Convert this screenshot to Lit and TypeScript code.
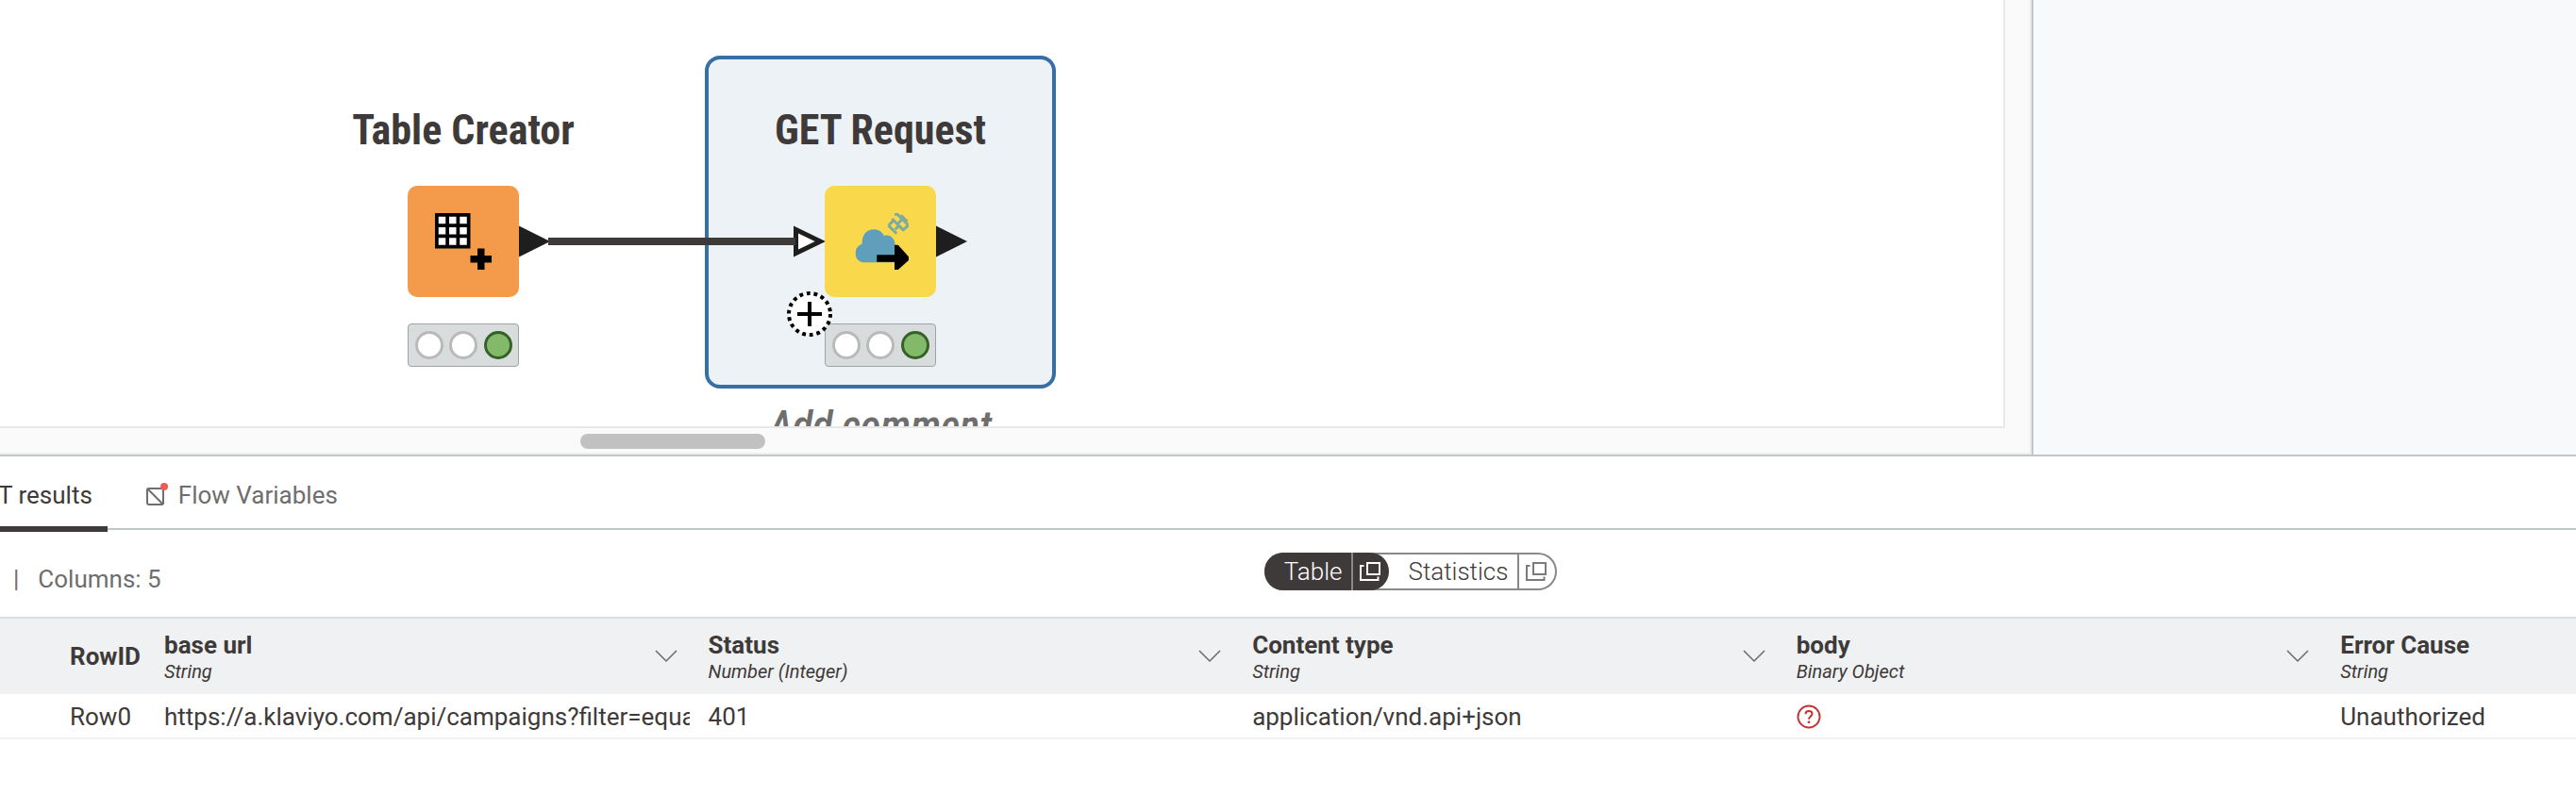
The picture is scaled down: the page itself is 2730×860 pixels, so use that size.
import {LitElement, html, css, svg, nothing} from "lit";
import {customElement, property} from "lit/decorators.js";
import {classMap} from "lit/directives/class-map.js";

interface Column {
  name: string;
  type: string;
}

const COLUMNS: Column[] = [
  {name: "base url", type: "String"},
  {name: "Status", type: "Number (Integer)"},
  {name: "Content type", type: "String"},
  {name: "body", type: "Binary Object"},
  {name: "Error Cause", type: "String"},
];

const openIcon = html`<svg class="icon" width="24" height="24" viewBox="0 0 24 24" fill="none" stroke="currentColor" stroke-width="2" aria-hidden="true">
  <rect x="9" y="3" width="13" height="12" />
  <path d="M5.500 6H2v15h18.500v-3.500" />
</svg>`;

const tableIcon = svg`
  <rect width="10" height="10" fill="#000" />
  ${[1, 4, 7].map((y) => [1, 4, 7].map((x) => svg`<rect x=${x} y=${y} width="2" height="2" fill="#fff" />`))}
  <path d="M12 10h2v2h2v2h-2v2h-2v-2h-2v-2h2z" fill="#000" />`;

const requestIcon = svg`
  <path d="M3 13.9C1.7 13.7 1 12.7 1 11.4C1 10 1.6 9.1 2.8 8.7C2.8 6.3 4 4.6 6 4.6C7.5 4.6 8.6 5.3 9 6.4C10.6 5.9 12.1 7 12.1 8.8V13.9Z" fill="#609fbc" />
  <g fill="none" stroke="#7dab9e" stroke-width=".8">
    <path d="M12 .3h.8L15.700 3.200V4M11.300 1.600L14.600 4.900M10.300 3.500L12.600 5.800" />
    <path d="M10.300 3.500L11.600 2.200M12.200 4.600L13.200 3.600M13 2.900L14 1.900M14.300 4.900L15.600 3.700M13.800.6L15.600 2.400" />
  </g>
  <path d="M7 11.8h5V9h1l3 3.300v1L13 16h-1v-2.200H7z" fill="#000" />`;

@customElement("workflow-node")
class WorkflowNode extends LitElement {
  @property() name = "";
  @property() kind: "source" | "request" = "source";
  @property({type: Boolean}) selected = false;
  @property({type: Boolean, attribute: "has-input"}) hasInput = false;

  static styles = css`
    :host { display: block; width: 372px; height: 353px; }
    .node {
      box-sizing: border-box; position: relative; width: 100%; height: 100%;
      display: flex; flex-direction: column; align-items: center;
      padding-top: 49px; border: 4px solid transparent; border-radius: 16px;
    }
    .selected { border-color: #366fa8; background: #edf2f7; }
    h2 {
      margin: 0; font-size: 44px; line-height: 52px; font-weight: 700;
      white-space: nowrap; color: #3e3a39;
    }
    .body { position: relative; margin-top: 33px; width: 118px; height: 118px; border-radius: 10px;
      display: grid; place-items: center; }
    .source { background: #f39b4b; }
    .request { background: #fad84b; }
    .port { position: absolute; top: 42px; }
    .out { left: 118px; }
    .in { right: 118px; }
    .status {
      box-sizing: border-box; width: 118px; height: 46px; margin-top: 28px;
      display: flex; align-items: center; justify-content: space-evenly;
      border: 1px solid #9fa3a4; border-radius: 4px; background: #d8dcdd;
    }
    .lamp { box-sizing: border-box; width: 30px; height: 30px; border: 3px solid #b9b9b9; border-radius: 50%; background: #fff; }
    .on { border-color: #356128; background: #82ba69; }
  `;

  render() {
    return html`
      <div class=${classMap({node: true, selected: this.selected})}>
        <h2>${this.name}</h2>
        <div class=${classMap({body: true, [this.kind]: true})}>
          <svg width="60" height="60" viewBox="0 0 16 16" aria-hidden="true">
            ${this.kind === "source" ? tableIcon : requestIcon}
          </svg>
          ${this.hasInput
            ? html`<svg class="port in" width="34" height="34" viewBox="0 0 34 34" aria-hidden="true">
                <path d="M3.500 4.500L29.500 17L3.500 29.500Z" fill="#fff" stroke="#1e1e1e" stroke-width="5" />
              </svg>`
            : nothing}
          <svg class="port out" width="34" height="34" viewBox="0 0 34 34" aria-hidden="true">
            <path d="M0 .5L33 17L0 33.500Z" fill="#1e1e1e" />
          </svg>
        </div>
        <div class="status">
          <span class="lamp"></span><span class="lamp"></span><span class="lamp on"></span>
        </div>
      </div>`;
  }
}

@customElement("workflow-canvas")
class WorkflowCanvas extends LitElement {
  static styles = css`
    :host { display: flex; flex-direction: column; background: #fafafa; border-right: 2px solid #eeecea; border-bottom: 2px solid #eeeeee; }
    .sheet {
      position: relative; height: 452px; margin-right: 26px; overflow: hidden;
      background: #fff; border-right: 2px solid #e8e8e8; border-bottom: 2px solid #e8e8e8;
    }
    .creator, .getter, .link, .add, .comment { position: absolute; }
    .creator { left: 305px; top: 59px; }
    .getter { left: 747px; top: 59px; }
    .link { left: 581px; top: 252px; width: 262px; height: 8px; background: #3e3a39; }
    .add { left: 833px; top: 308px; width: 50px; height: 50px; padding: 0; border: 0; background: none; }
    .comment {
      left: 747px; top: 426px; width: 372px; margin: 0; text-align: center;
      font-size: 44px; line-height: 52px; font-style: italic; font-weight: 500; color: #6e6e6e;
    }
    .scroll { height: 16px; padding: 6px 0 4px; display: grid; grid-template-columns: 615fr 196fr 1340fr; }
    .thumb { grid-column: 2; border-radius: 8px; background: #c1c1c1; }
  `;

  render() {
    return html`
      <div class="sheet">
        <workflow-node class="creator" name="Table Creator" kind="source"></workflow-node>
        <workflow-node class="getter" name="GET Request" kind="request" selected has-input></workflow-node>
        <div class="link"></div>
        <button class="add" aria-label="Add port">
          <svg width="50" height="50" viewBox="0 0 50 50" aria-hidden="true">
            <circle cx="25" cy="25" r="22" fill="#fff" stroke="#000" stroke-width="4" stroke-dasharray="3.840 3.840" />
            <path d="M12 25h26M25 12v26" stroke="#000" stroke-width="4" />
          </svg>
        </button>
        <p class="comment">Add comment</p>
      </div>
      <div class="scroll"><div class="thumb"></div></div>`;
  }
}

@customElement("result-table")
class ResultTable extends LitElement {
  static styles = css`
    :host { display: block; }
    table { width: 100%; table-layout: fixed; border-collapse: separate; border-spacing: 0; border-top: 2px solid #d8dcdd; font-size: 26px; line-height: 30px; }
    .id { width: 164px; }
    .wide { width: 21.12%; }
    th, td { text-align: left; padding: 0 10px; vertical-align: middle; font-weight: 400; }
    thead th { height: 80px; background: #eff1f2; font-weight: 700; }
    tbody th, tbody td { box-sizing: border-box; height: 48px; padding-top: 2px; border-bottom: 2px solid #eff1f2; }
    thead th:first-child, tbody th { padding-left: 74px; padding-right: 0; }
    .head { display: flex; align-items: center; justify-content: space-between; padding-right: 13px; }
    .title { padding-top: 2px; }
    .type { display: block; font-size: 20px; line-height: 26px; font-weight: 400; font-style: italic; }
    .menu { display: flex; padding: 0; border: 0; background: none; color: #6a6a6a; }
    .cut { overflow: hidden; white-space: nowrap; }
    .missing { display: block; }
  `;

  render() {
    return html`
      <table>
        <colgroup><col class="id" />${COLUMNS.slice(1).map(() => html`<col class="wide" />`)}<col /></colgroup>
        <thead>
          <tr>
            <th scope="col">RowID</th>
            ${COLUMNS.map((c, i) => html`
              <th scope="col"><div class="head">
                <div class="title">${c.name}<span class="type">${c.type}</span></div>
                ${i < COLUMNS.length - 1
                  ? html`<button class="menu" aria-label="Options for ${c.name}">
                      <svg width="24" height="14" viewBox="0 0 24 14" fill="none" stroke="currentColor" stroke-width="1.500"><path d="M1 1l11 11L23 1" /></svg>
                    </button>`
                  : nothing}
              </div></th>`)}
          </tr>
        </thead>
        <tbody>
          <tr>
            <th scope="row">Row0</th>
            <td><div class="cut">https://a.klaviyo.com/api/campaigns?filter=equa</div></td>
            <td>401</td>
            <td>application/vnd.api+json</td>
            <td>
              <svg class="missing" width="26" height="26" viewBox="0 0 26 26" fill="none" stroke="#c03634" stroke-width="2" role="img" aria-label="Missing value">
                <circle cx="13" cy="13" r="11.500" />
                <path d="M9.500 10.300C9.500 8.200 11 7 13 7s3.500 1.200 3.500 3.100c0 2.600-3.500 2.500-3.500 5.700" />
                <circle cx="13" cy="18.800" r="1" fill="#c03634" stroke-width="1" />
              </svg>
            </td>
            <td>Unauthorized</td>
          </tr>
        </tbody>
      </table>`;
  }
}

@customElement("app-root")
class AppRoot extends LitElement {
  static styles = css`
    :host {
      display: flex; flex-direction: column; min-height: 100vh; background: #fff; overflow: hidden;
      font-family: "Roboto", "Liberation Sans", sans-serif; font-size: 26px; line-height: 30px; color: #3e3a39;
    }
    .top { display: flex; border-bottom: 2px solid #c1c6c8; }
    workflow-canvas { flex: 1; min-width: 0; font-family: "Roboto Condensed", "Roboto", sans-serif; }
    .side { box-sizing: border-box; width: 577px; border-left: 2px solid #c1c6c8; background: #f7f9fb; }
    button { font: inherit; color: inherit; background: none; border: 0; padding: 0; margin: 0; }
    .tabs { display: flex; height: 76px; margin-left: -2px; border-bottom: 2px solid #c1c6c8; }
    .tab { position: relative; display: flex; align-items: center; gap: 10px; padding: 6px 16px 0 39px; color: #6e6e6e; }
    .tab.active { padding-left: 0; color: #3e3a39; }
    .tab.active::after { content: ""; position: absolute; left: 0; right: 0; bottom: -4px; height: 6px; background: #3e3a39; }
    .bar { display: grid; grid-template-columns: 1339fr auto 1079fr; align-items: start; padding: 24px 0 28px; }
    .meta { display: flex; gap: 20px; height: 40px; padding: 0 0 0 14px; line-height: 56px; color: #6e6e6e; }
    .switch { display: flex; box-sizing: border-box; height: 40px; border-radius: 20px; box-shadow: inset 0 0 0 2px #8a8888; font-weight: 300; }
    .part { display: flex; align-items: stretch; height: 40px; }
    .part.active { background: #3e3a39; color: #fff; border-radius: 20px; }
    .label { padding: 0 10px 0 21px; }
    .part.last .label { padding-left: 20px; }
    .pop { display: grid; align-items: center; justify-content: start; width: 40px; padding-left: 6px; border-left: 2px solid #8a8888; }
    .part.last .pop { width: 42px; color: #7c7a7a; }
  `;

  render() {
    return html`
      <div class="top">
        <workflow-canvas></workflow-canvas>
        <aside class="side"></aside>
      </div>
      <nav class="tabs">
        <button class="tab active">T results</button>
        <button class="tab">
          <svg width="26" height="26" viewBox="0 0 26 26" fill="none" stroke="#6e6e6e" stroke-width="2" aria-hidden="true">
            <rect x="3" y="6" width="17" height="17" rx="2" />
            <path d="M3 6l17 17" />
            <circle cx="21" cy="4" r="4" fill="#f05a55" stroke="none" />
          </svg>
          Flow Variables
        </button>
      </nav>
      <div class="bar">
        <div class="meta"><span>|</span><span>Columns: 5</span></div>
        <div class="switch">
          <div class="part active"><button class="label">Table</button><button class="pop" aria-label="Open table in new window">${openIcon}</button></div>
          <div class="part last"><button class="label">Statistics</button><button class="pop" aria-label="Open statistics in new window">${openIcon}</button></div>
        </div>
      </div>
      <result-table></result-table>`;
  }
}
